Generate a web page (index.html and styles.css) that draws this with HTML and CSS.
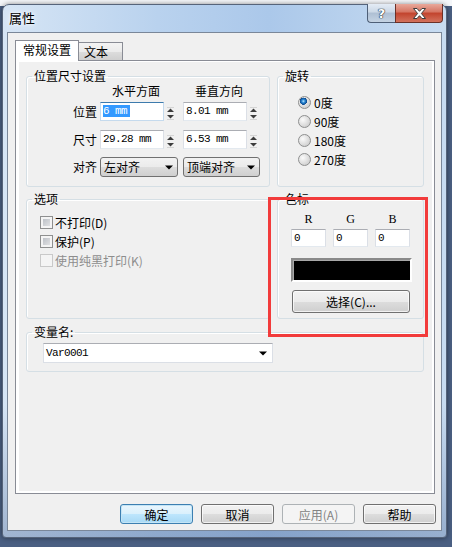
FILE: index.html
```html
<!DOCTYPE html>
<html lang="zh-CN">
<head>
  <meta charset="UTF-8">
  <meta name="viewport" content="width=device-width, initial-scale=1.0">
  <title>属性</title>
  <link rel="stylesheet" href="styles.css">
</head>
<body>
  <div class="window">
    <!-- 标题栏 -->
    <div class="titlebar">
      <div class="title">属性</div>
      <div class="caption-btns">
        <div class="cap-btn help">?</div>
        <div class="cap-btn close">
          <svg width="15" height="11" viewBox="0 0 15 11"><path d="M1.5 0.5H5L7.5 3.3L10 0.5H13.5L9.4 5.5L13.5 10.5H10L7.5 7.7L5 10.5H1.5L5.6 5.5Z" fill="#fff" stroke="#3b3b3b" stroke-width="1"/></svg>
        </div>
      </div>
    </div>

    <div class="client">
      <!-- Tabs -->
      <div class="tabs">
        <div class="tab active">常规设置</div>
        <div class="tab">文本</div>
      </div>

      <div class="panel">
        <div class="page">
          <div class="groups">
            <fieldset class="group">
              <legend>位置尺寸设置</legend>
              <div class="size-grid">
                <span></span>
                <span class="col-head">水平方面</span>
                <span class="col-head">垂直方向</span>

                <span class="row-label">位置</span>
                <div class="spin-field">
                  <div class="textbox focused"><span class="selected">6 mm</span></div>
                  <svg class="spin" width="13" height="19" viewBox="0 0 13 19"><path d="M3 5.5h7" stroke="#d4d4d4"/><path d="M3 10h7L6.5 6.5z" fill="#3c3c3c"/><path d="M3 13h7l-3.5 3.5z" fill="#3c3c3c"/><path d="M3 17.5h7" stroke="#d4d4d4"/></svg>
                </div>
                <div class="spin-field">
                  <div class="textbox">8.01 mm</div>
                  <svg class="spin" width="13" height="19" viewBox="0 0 13 19"><path d="M3 5.5h7" stroke="#d4d4d4"/><path d="M3 10h7L6.5 6.5z" fill="#3c3c3c"/><path d="M3 13h7l-3.5 3.5z" fill="#3c3c3c"/><path d="M3 17.5h7" stroke="#d4d4d4"/></svg>
                </div>

                <span class="row-label">尺寸</span>
                <div class="spin-field">
                  <div class="textbox">29.28 mm</div>
                  <svg class="spin" width="13" height="19" viewBox="0 0 13 19"><path d="M3 5.5h7" stroke="#d4d4d4"/><path d="M3 10h7L6.5 6.5z" fill="#3c3c3c"/><path d="M3 13h7l-3.5 3.5z" fill="#3c3c3c"/><path d="M3 17.5h7" stroke="#d4d4d4"/></svg>
                </div>
                <div class="spin-field">
                  <div class="textbox">6.53 mm</div>
                  <svg class="spin" width="13" height="19" viewBox="0 0 13 19"><path d="M3 5.5h7" stroke="#d4d4d4"/><path d="M3 10h7L6.5 6.5z" fill="#3c3c3c"/><path d="M3 13h7l-3.5 3.5z" fill="#3c3c3c"/><path d="M3 17.5h7" stroke="#d4d4d4"/></svg>
                </div>

                <span class="row-label last">对齐</span>
                <div class="dropdown">左对齐<svg width="8" height="5" viewBox="0 0 8 5"><path d="M0 0.5h8L4 4.5z"/></svg></div>
                <div class="dropdown narrow">顶端对齐<svg width="8" height="5" viewBox="0 0 8 5"><path d="M0 0.5h8L4 4.5z"/></svg></div>
              </div>
            </fieldset>

            <fieldset class="group">
              <legend>旋转</legend>
              <div class="radio-list">
                <div class="radio-row"><span class="radio checked"></span>0度</div>
                <div class="radio-row"><span class="radio"></span>90度</div>
                <div class="radio-row"><span class="radio"></span>180度</div>
                <div class="radio-row"><span class="radio"></span>270度</div>
              </div>
            </fieldset>

            <fieldset class="group">
              <legend>选项</legend>
              <div class="check-list">
                <div class="check-row"><span class="checkbox"></span>不打印(D)</div>
                <div class="check-row"><span class="checkbox"></span>保护(P)</div>
                <div class="check-row disabled"><span class="checkbox"></span>使用纯黑打印(K)</div>
              </div>
            </fieldset>

            <fieldset class="group">
              <legend>色标</legend>
              <div class="color-box">
                <div class="rgb-grid">
                  <span class="rgb-label">R</span>
                  <span class="rgb-label">G</span>
                  <span class="rgb-label">B</span>
                  <div class="textbox">0</div>
                  <div class="textbox">0</div>
                  <div class="textbox">0</div>
                </div>
                <div class="swatch"></div>
                <div class="btn pick">选择(C)...</div>
              </div>
            </fieldset>

            <fieldset class="group wide">
              <legend>变量名:</legend>
              <div class="combo">Var0001<svg width="8" height="5" viewBox="0 0 8 5"><path d="M0 0.5h8L4 4.5z"/></svg></div>
            </fieldset>
          </div>

          <!-- 标注框 -->
          <div class="mark"></div>
        </div>
      </div>

      <div class="buttons">
        <div class="btn default">确定</div>
        <div class="btn">取消</div>
        <div class="btn disabled">应用(A)</div>
        <div class="btn">帮助</div>
      </div>
    </div>
  </div>
</body>
</html>
```

FILE: styles.css
```css
* {
  box-sizing: border-box;
}
body {
  margin: 0;
  height: 547px;
  overflow: hidden;
  background: linear-gradient(#f4f6f9 0, #f4f6f9 6px, #4a5f82 6px);
  font-family: "Noto Sans CJK SC", "Liberation Sans", sans-serif;
  font-size: 12px;
  color: #000;
}
.window {
  margin: 4px 0 0 2px;
  width: 445px;
  height: 534px;
  padding: 0 4px 6px;
  border: 1px solid #56647a;
  border-radius: 7px 7px 4px 4px;
  background:
    linear-gradient(180deg, rgba(60, 90, 140, 0) 75%, rgba(60, 90, 140, 0.35) 100%),
    linear-gradient(90deg, #d6e5f5 0%, #b9d2ee 35%, #abc8ea 60%, #c8dcf1 100%);
  box-shadow: 0 0 5px rgba(0, 0, 0, 0.45);
}

/* 标题栏 */
.titlebar {
  display: flex;
  height: 27px;
}
.title {
  padding: 5px 0 0 2px;
  font-size: 13px;
  line-height: 16px;
  text-shadow: 0 0 6px #fff, 0 0 3px #fff;
}
.caption-btns {
  display: flex;
  margin: -1px -1px 0 auto;
  height: 19px;
}
.cap-btn {
  display: flex;
  align-items: center;
  justify-content: center;
  border: 1px solid #4e5f77;
  border-top: none;
}
.cap-btn.help {
  width: 28px;
  border-right: none;
  border-radius: 0 0 0 4px;
  background: linear-gradient(#e4ecf5, #cbd8e6 45%, #aebfd3 50%, #c4d3e3);
  color: #fff;
  font-family: "DejaVu Sans", sans-serif;
  font-weight: bold;
  font-size: 13px;
  text-shadow: 0 0 1px #1d2a3a, 0 0 1px #1d2a3a, 0 0 1px #1d2a3a;
}
.cap-btn.close {
  width: 48px;
  border-color: #6b3128;
  border-radius: 0 0 4px 0;
  background: linear-gradient(#e9a99b, #d57462 45%, #c2432d 50%, #d3725d);
}

/* 客户区 */
.client {
  height: 499px;
  border: 1px solid #7a8799;
  background: #f0f0f0;
}
.tabs {
  display: flex;
  align-items: flex-end;
  height: 27px;
  padding-left: 7px;
}
.tab {
  border: 1px solid #898c95;
  border-bottom: none;
  line-height: 14px;
  padding-top: 2px;
}
.tab.active {
  position: relative;
  z-index: 1;
  width: 64px;
  height: 21px;
  margin-bottom: -1px;
  padding-left: 7px;
  background: #fff;
}
.tab:not(.active) {
  width: 45px;
  height: 18px;
  margin-left: -1px;
  padding-left: 5px;
  background: linear-gradient(#f3f3f3, #ebebeb 50%, #dddddd 50%, #cfcfcf);
}
.panel {
  height: 434px;
  margin: 0 6px 0 7px;
  padding: 1px 2px 2px 3px;
  border: 1px solid #898c95;
  background: #fff;
}
.page {
  position: relative;
  height: 100%;
  padding: 8px 0 0 7px;
  background: #f0f0f0;
}
.groups {
  display: grid;
  grid-template-columns: 244px 147px;
  column-gap: 7px;
  row-gap: 6px;
}

/* 分组框 */
.group {
  margin: 0;
  padding: 0;
  min-width: 0;
  border: 1px solid #d5dfe5;
  border-radius: 3px;
  box-shadow: inset 1px 1px 0 #fff;
}
.group legend {
  margin-left: 5px;
  padding: 0 2px;
  height: 12px;
  line-height: 12px;
}
.group.wide {
  grid-column: 1 / -1;
  margin-top: 1px;
  padding: 5px 0 8px;
}

.size-grid {
  display: grid;
  grid-template-columns: 68px 78px 78px;
  grid-template-rows: 19px 28px 27px 20px;
  column-gap: 5px;
  padding: 1px 0 9px;
}
.col-head {
  padding: 2px 0 0 12px;
  line-height: 12px;
}
.row-label {
  margin-right: -5px;
  padding-right: 3px;
  text-align: right;
  line-height: 19px;
}
.row-label.last {
  line-height: 20px;
}
.spin-field {
  display: flex;
  height: 19px;
}
.textbox {
  height: 19px;
  padding-left: 2px;
  border: 1px solid #dbdfe6;
  border-top-color: #abadb3;
  border-bottom-color: #e3e9ef;
  background: #fff;
  font-family: "Liberation Mono", monospace;
  font-size: 11px;
  letter-spacing: -0.6px;
  line-height: 17px;
  white-space: nowrap;
}
.spin-field .textbox {
  width: 64px;
}
.textbox.focused {
  border-color: #c5daed;
  border-top-color: #3d7bad;
}
.selected {
  padding-right: 3px;
  background: #3399ff;
  color: #fff;
}
.dropdown {
  display: flex;
  align-items: center;
  justify-content: space-between;
  height: 20px;
  padding: 0 4px 0 3px;
  border: 1px solid #707070;
  border-radius: 3px;
  background: linear-gradient(#f2f2f2, #ebebeb 50%, #dddddd 50%, #cfcfcf);
  line-height: 18px;
}
.dropdown.narrow {
  width: 77px;
}

.radio-list {
  padding: 11px 0 0 20px;
}
.radio-row,
.check-row {
  display: flex;
  align-items: center;
  height: 19px;
}
.radio-row {
  gap: 3px;
}
.radio {
  width: 13px;
  height: 13px;
  border: 1px solid #8e8f8f;
  border-radius: 50%;
  background: radial-gradient(circle at 35% 35%, #fbfbfb, #d4d4d4 70%, #bdbdbd);
}
.radio.checked {
  background:
    radial-gradient(circle at 40% 38%, #bfe8ff 0, #2b8ad6 1.6px, #0d4a90 3.4px, rgba(0, 0, 0, 0) 3.8px),
    radial-gradient(circle at 35% 35%, #fbfbfb, #d4d4d4 70%, #bdbdbd);
}

.check-list {
  padding: 8px 0 0 13px;
}
.check-row {
  gap: 2px;
}
.checkbox {
  width: 13px;
  height: 13px;
  border: 1px solid #8e8f8f;
  background: linear-gradient(135deg, #b3b8bf, #eaeaeb);
  box-shadow: inset 0 0 0 2px #f4f4f4;
}
.check-row.disabled {
  color: #8d8d8d;
}
.check-row.disabled .checkbox {
  border-color: #c9c9c9;
  background: #f4f4f4;
  box-shadow: none;
}

.color-box {
  padding: 8px 0 5px 13px;
}
.rgb-grid {
  display: grid;
  grid-template-columns: repeat(3, 35px);
  grid-template-rows: 13px 18px;
  column-gap: 7px;
  row-gap: 3px;
}
.rgb-label {
  text-align: center;
  font-family: "Liberation Serif", serif;
  font-size: 12px;
  line-height: 13px;
}
.rgb-grid .textbox {
  height: 18px;
  line-height: 16px;
}
.swatch {
  width: 121px;
  height: 24px;
  margin-top: 11px;
  border: 2px solid #fff;
  border-top-color: #8a8a8a;
  border-left-color: #8a8a8a;
  background: #000;
  box-shadow: inset 1px 1px 0 #a8a8a8;
}
.btn {
  display: flex;
  align-items: center;
  justify-content: center;
  border: 1px solid #707070;
  border-radius: 3px;
  background: linear-gradient(#f2f2f2, #ebebeb 50%, #dddddd 50%, #cfcfcf);
  box-shadow: inset 0 0 0 1px rgba(255, 255, 255, 0.7);
}
.btn.pick {
  width: 118px;
  height: 23px;
  margin: 8px 0 0 1px;
}

.combo {
  display: flex;
  align-items: center;
  justify-content: space-between;
  width: 230px;
  height: 20px;
  margin-left: 16px;
  padding: 0 5px 0 2px;
  border: 1px solid #dbdfe6;
  border-top-color: #abadb3;
  background: #fff;
  font-family: "Liberation Mono", monospace;
  font-size: 11px;
  letter-spacing: -0.6px;
}

.mark {
  position: absolute;
  left: 249px;
  top: 135px;
  width: 160px;
  height: 140px;
  border: 3px solid #f23b3b;
}

/* 底部按钮 */
.buttons {
  display: flex;
  justify-content: flex-end;
  gap: 8px;
  margin: 10px 5px 0 0;
}
.buttons .btn {
  width: 73px;
  height: 20px;
}
.btn.default {
  border-color: #3c7fb1;
  background: linear-gradient(#eaf6fd, #d9f0fc 50%, #bee6fd 50%, #a7d9f5);
  box-shadow: inset 0 0 0 1px #c4e5f6;
}
.btn.disabled {
  border-color: #adb2b5;
  background: #f4f4f4;
  color: #838383;
  box-shadow: none;
}
```
